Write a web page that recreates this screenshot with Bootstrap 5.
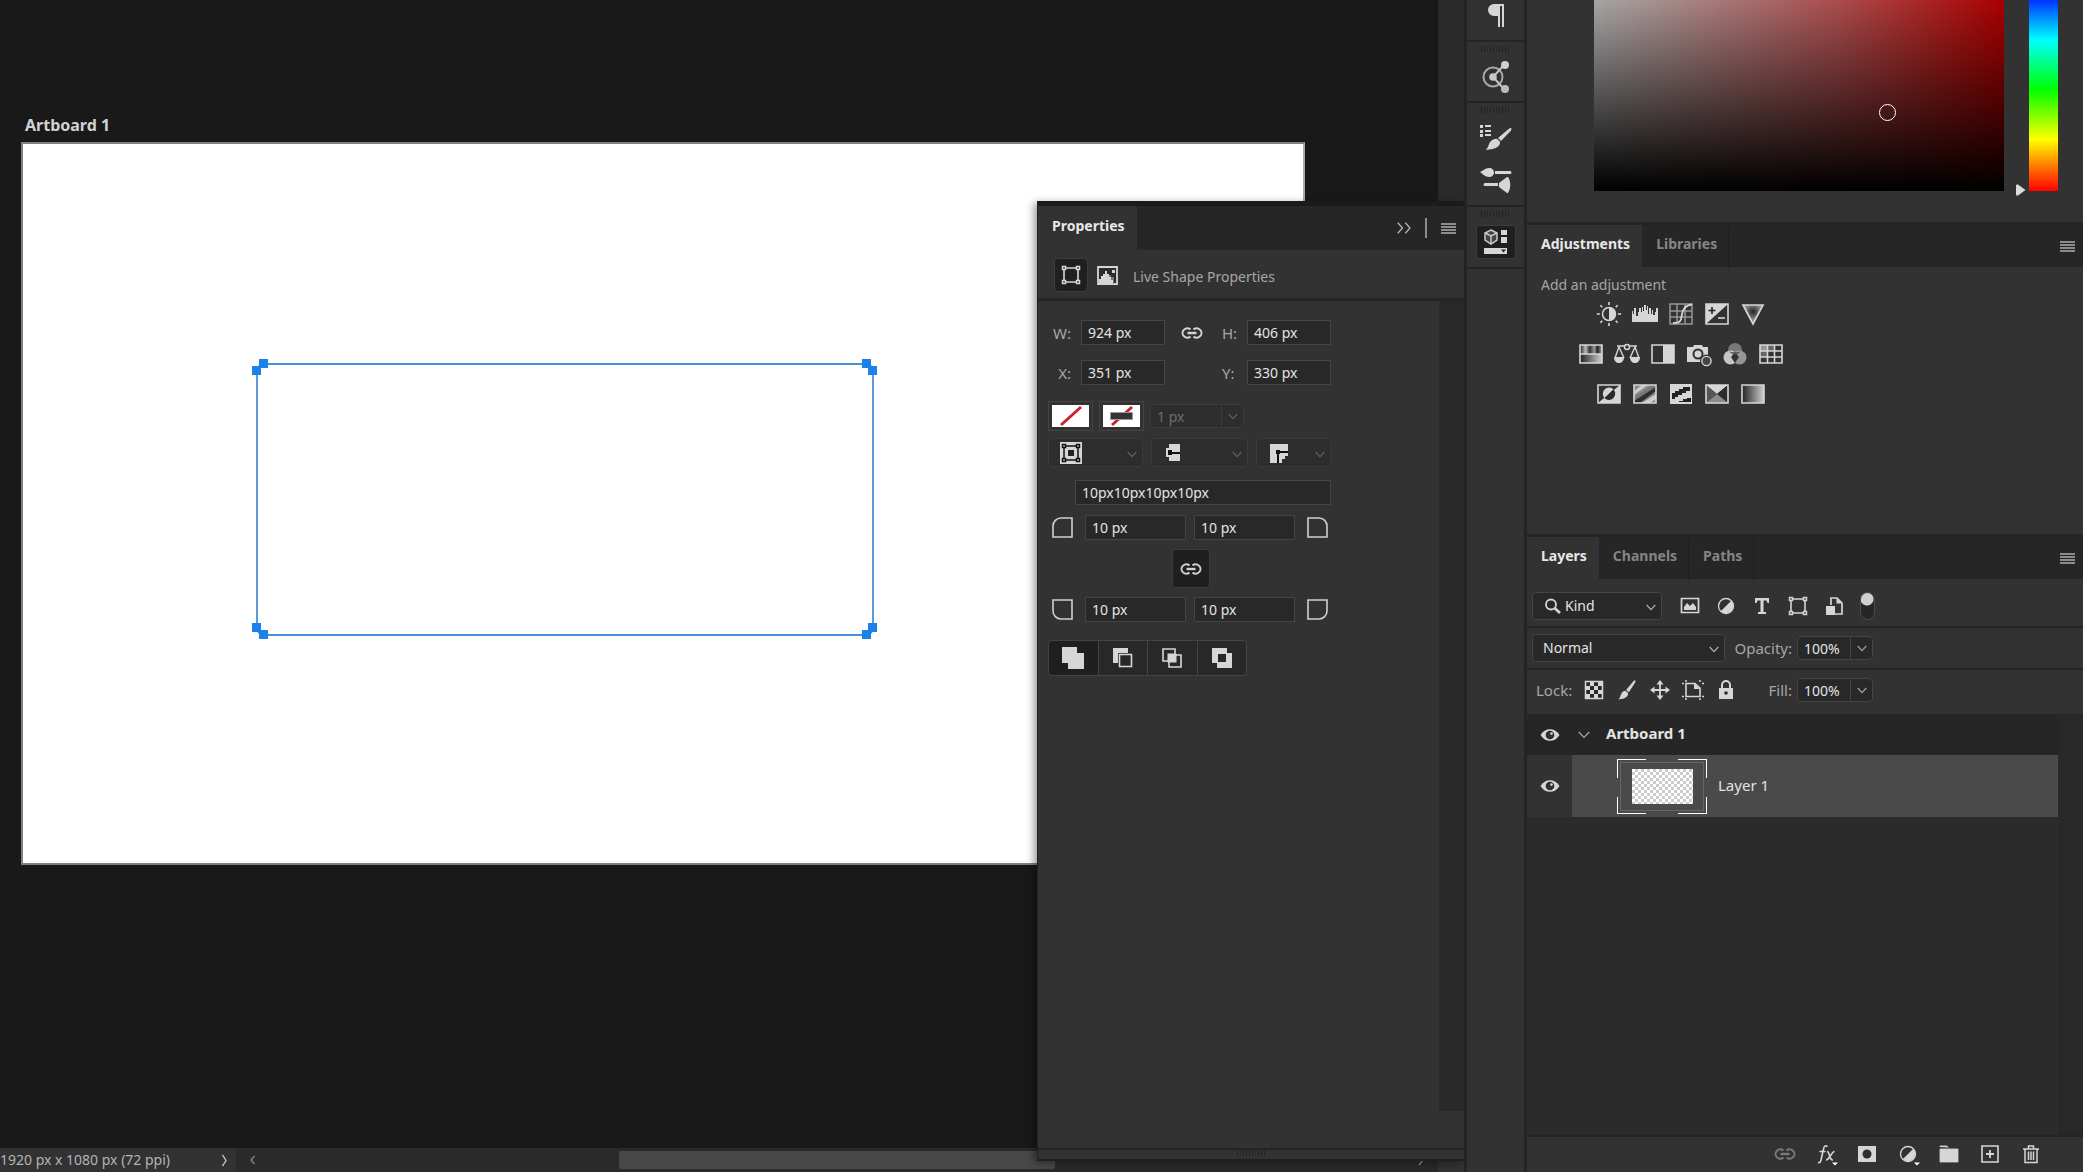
<!DOCTYPE html>
<html lang="en" data-bs-theme="dark">
<head>
<meta charset="utf-8">
<meta name="viewport" content="width=device-width, initial-scale=1">
<title>Artboard 1</title>
<link href="https://cdn.jsdelivr.net/npm/bootstrap@5.3.0/dist/css/bootstrap.min.css" rel="stylesheet">
<style>
:root{--panel:#323232;--well:#262626;--field:#282828;--edge:#444;--line:#242424;--ico:#d6d6d6;--dim:#a6a6a6;--txt:#e4e4e4}
body{background:#191919;color:var(--txt);font-family:"Noto Sans","Open Sans",sans-serif;font-size:14px;line-height:20px;overflow:hidden}
svg{display:block;flex:none}
.i24{width:24px;height:24px;color:var(--ico)}
.i20{width:20px;height:20px;color:var(--ico)}
.bare{background:none;border:0;padding:0;color:var(--ico)}
.dim{color:var(--dim)}
.lbl{color:var(--dim);font-size:15px}

/* canvas */
.vscroll{top:0;right:0;width:26px;height:201px;background:#2a2a2a}
.board-name{left:25px;top:113px;font-size:16px;line-height:24px;color:#d2d2d2}
.board{left:21px;top:142px;width:1284px;height:723px;background:#fff;border:2px solid #808080;border-right-color:#aaa}
.vshape{left:250px;top:357px;width:630px;height:286px}
.statusbar{height:24px;background:#2a2a2a}
.doc-size{width:236px;background:var(--panel);color:#b4b4b4}
.hthumb{left:619px;width:436px;top:3px;height:18px;background:#484848;border-radius:2px}
.corner-cell{width:26px;right:0;top:0;bottom:0;background:var(--panel)}
.end-arrow{right:40px;top:6px}

/* floating panel */
.floater{top:201px;right:0;bottom:11px;width:426px;background:var(--panel);border-top:5px solid #1b1b1b;border-bottom:2px solid #1f1f1f;box-shadow:-1px 0 0 #222,-4px 2px 8px rgba(0,0,0,.4)}
.tabbar{height:42px;background:var(--well)}
.tabbar .nav-link{height:43px;padding:0 11px 6px 14px;border:0;border-radius:0;border-right:1px solid #202020;font-weight:700;color:#858585;display:flex;align-items:center;margin-bottom:-1px}
.tabbar .nav-link.active{background:var(--panel);color:#e8e8e8;border-color:transparent}
.floater .tabbar{height:44px}
.floater .tabbar .nav-link{height:44px;padding-bottom:4px}
.subhead{height:51px;border-bottom:3px solid var(--line);padding:2px 0 0 16px}
.modebtn{width:34px;height:34px;background:#1f1f1f;border:1px solid #3c3c3c;border-radius:4px;padding:0;display:flex;align-items:center;justify-content:center}
.pbody{padding:19px 0 0 10px}
.ptrack{width:25px;background:#292929;margin-bottom:37px}
.grip-row{height:11px;border-top:2px solid var(--line)}
.grip{width:29px;height:6px;background:repeating-linear-gradient(90deg,#242424 0 1px,transparent 1px 3px)}
.dims{display:grid;grid-template-columns:33px 84px 57px 25px 84px;row-gap:15px;align-items:center}
.dims .text-end{padding-right:10px}
.box{height:25px;background:var(--field);border:1px solid var(--edge);border-radius:0;color:var(--txt);font-size:14px;line-height:20px;padding:1px 6px;min-width:0;width:100%}
.corners{display:grid;grid-template-columns:29px 101px 101px 25px;column-gap:8px;align-items:center;width:280px}
.sw{width:45px;height:30px;background:none;border:1px solid var(--edge);padding:3px}
.sw svg{background:#fff}
.combo{height:24px;border:1px solid var(--edge);border-radius:4px;background:var(--field)}
.combo input{background:none;border:0;color:var(--txt);padding:0 0 0 6px;min-width:0;flex:1;height:22px}
.combo button{background:none;border:0;border-left:1px solid var(--edge);width:22px;padding:0;display:flex;align-items:center;justify-content:center;color:#a0a0a0}
.combo.off{border-color:#3c3c3c;background:#2d2d2d}
.combo.off input{color:#6e6e6e}
.combo.off button{border-color:#3c3c3c;color:#5c5c5c}
.pick{position:relative;border:1px solid var(--edge);border-radius:4px;background:var(--field);color:#b0b0b0}
.pick select{appearance:none;background:none;border:0;width:100%;height:100%;color:var(--txt);padding:0 24px 0 12px;font-size:14px;display:block}
.pick .ch{position:absolute;right:5px;bottom:8px;pointer-events:none}
.pick .lead-ico{position:absolute;left:11px;top:50%;transform:translateY(-50%);pointer-events:none}
.pick.off{background:#2d2d2d;border-color:#3b3b3b;height:29px;color:#606060}
.linkbtn{width:38px;height:39px;margin-left:124px;background:#1f1f1f;border:1px solid #3a3a3a;border-radius:3px;padding:0;display:flex;align-items:center;justify-content:center}
.ops{width:199px;height:36px}
.ops .btn{background:var(--field);border:1px solid var(--edge);border-radius:4px;padding:0;display:flex;align-items:center;justify-content:center;flex:1}
.ops .btn.active{background:#1f1f1f}

/* dock and right column */
.dock{width:61px;background:var(--panel);border-left:3px solid var(--line);border-right:1px solid var(--line)}
.dock section{border-bottom:2px solid var(--line);display:flex;flex-direction:column;align-items:center}
.side{width:558px;background:var(--panel);border-left:2px solid var(--line)}
.color-pane{height:225px;border-bottom:3px solid var(--line)}
.field2d{width:410px;height:191px;margin-left:67px;background:linear-gradient(to bottom,rgba(0,0,0,0),#000),linear-gradient(to right,#a6a6a6,#aa4c4c 60%,#aa0000)}
.ring{left:285px;top:104px;width:17px;height:17px;border:1px solid #fff;border-radius:50%}
.hue{width:29px;height:191px;background:linear-gradient(to bottom,#0033ff,#00ffff 21%,#00ff00 47%,#ffff00 73%,#ff0000)}
.adj-pane{height:312px;border-bottom:3px solid var(--line)}
.adj-row{display:flex;justify-content:center;gap:10px;width:230px;height:26px;align-items:center}
.adj-row svg{width:26px;height:26px;color:var(--ico)}
.strip{border-bottom:2px solid var(--line)}
.layer-list{background:#2b2b2b}
.ltrack{width:25px;background:#282828}
.lrow{font-size:15px}
.lrow span{padding-bottom:3px}
.eye-col{width:45px;display:flex;align-items:center;justify-content:center}
.thumb{width:90px;height:55px;background:linear-gradient(#fff 0 0) 0 0/29px 1px,linear-gradient(#fff 0 0) 100% 0/29px 1px,linear-gradient(#fff 0 0) 0 100%/29px 1px,linear-gradient(#fff 0 0) 100% 100%/29px 1px,linear-gradient(#fff 0 0) 0 0/1px 19px,linear-gradient(#fff 0 0) 0 100%/1px 17px,linear-gradient(#fff 0 0) 100% 0/1px 19px,linear-gradient(#fff 0 0) 100% 100%/1px 17px;background-repeat:no-repeat;padding:3px}
.thumb-in{border:1px solid #666;height:49px;display:flex;align-items:center;justify-content:center}
.checker{width:61px;height:35px;background:repeating-conic-gradient(#ccc 0 25%,#fff 0 50%) 0 0/6px 6px}
.foot{height:37px;border-top:2px solid var(--line);padding:0 40px 2px 0;gap:17px}
.toggle{appearance:none;width:15px;height:28px;border:1px solid #4c4c4c;border-radius:8px;margin:0;background:radial-gradient(circle at 6px 6px,#d0d0d0 0 6px,#262626 7px)}
</style>
<script src="https://cdn.jsdelivr.net/npm/bootstrap@5.3.0/dist/js/bootstrap.bundle.min.js"></script>
</head>
<body class="vh-100 d-flex">

<svg width="0" height="0" class="position-absolute" aria-hidden="true">
  <defs>
    <symbol id="chev" viewBox="0 0 10 7"><path d="M.7 1 5 5.600 9.300 1" fill="none" stroke="currentColor" stroke-width="1.200"/></symbol>
    <symbol id="burger" viewBox="0 0 15 11"><path d="M0 1h15M0 4h15M0 7h15M0 10h15" stroke="#8c8c8c" stroke-width="2" shape-rendering="crispEdges"/></symbol>
    <symbol id="chain" viewBox="0 0 22 12"><path d="M9.500 2.300A5 4.600 0 1 0 9.500 9.700M12.500 2.300a5 4.600 0 1 1 0 7.400" fill="none" stroke="currentColor" stroke-width="2"/><path d="M6.500 6h9" stroke="currentColor" stroke-width="2.400"/></symbol>
    <symbol id="frame" viewBox="0 0 20 20"><path d="M5 3h10M5 17h10M3 5v10M17 5v10" stroke="currentColor" stroke-width="1.600"/><path d="M1.500 1.500h3v3h-3zM15.500 1.500h3v3h-3zM1.500 15.500h3v3h-3zM15.500 15.500h3v3h-3z" fill="none" stroke="currentColor" stroke-width="1.500"/></symbol>
    <symbol id="eye" viewBox="0 0 20 14"><path d="M.5 7C5-.8 15-.8 19.500 7 15 14.800 5 14.800.5 7z" fill="currentColor"/><circle cx="10" cy="7" r="4.300" fill="#2b2b2b"/><circle cx="10" cy="7" r="2.800" fill="#333"/><circle cx="11.500" cy="5.600" r="1.300" fill="#d6d6d6"/></symbol>
    <symbol id="half" viewBox="0 0 20 20"><circle cx="10" cy="10" r="7.500" fill="none" stroke="currentColor" stroke-width="1.300"/><path d="M15.300 4.700A7.500 7.500 0 0 1 4.700 15.300z" fill="currentColor"/></symbol>
    <symbol id="brush" viewBox="0 0 20 22"><path d="M19 .5c.6.5.3 1.600-.2 2.400L12 13.500 9 11 17 1.500c.8-.8 1.500-1.300 2-1z" fill="currentColor"/><path d="M8.200 11.900l3 2.500c.3 3.500-2.500 6.500-10.700 7C3 19 2.500 17 4 14.500c1-1.700 2.500-2.500 4.200-2.600z" fill="currentColor"/></symbol>
    <linearGradient id="g1"><stop offset="0" stop-color="#222"/><stop offset="1" stop-color="#d0d0d0"/></linearGradient>
    <linearGradient id="g2"><stop offset="0" stop-color="#222"/><stop offset=".25" stop-color="#bbb"/><stop offset=".45" stop-color="#333"/><stop offset=".65" stop-color="#999"/><stop offset=".8" stop-color="#222"/><stop offset="1" stop-color="#aaa"/></linearGradient>
    <radialGradient id="g3" cx=".5" cy=".35" r=".4"><stop offset="0" stop-color="#222"/><stop offset="1" stop-color="#888"/></radialGradient>
  </defs>
</svg>

<!-- document area -->
<main class="position-relative flex-grow-1 d-flex flex-column overflow-hidden">
  <div class="flex-grow-1">
    <div class="vscroll position-absolute"></div>
    <div class="board-name position-absolute fw-bold">Artboard 1</div>
    <div class="board position-absolute"></div>
    <svg class="vshape position-absolute" viewBox="0 0 630 286" aria-label="Rounded rectangle">
      <rect x="7" y="7" width="616" height="271" rx="7" fill="none" stroke="#4a90d6" stroke-width="1.800"/>
      <g fill="#1a82ea" shape-rendering="crispEdges">
        <rect x="9" y="2" width="9" height="9"/><rect x="2" y="9" width="9" height="9"/>
        <rect x="612" y="2" width="9" height="9"/><rect x="618" y="9" width="9" height="9"/>
        <rect x="2" y="266" width="9" height="9"/><rect x="9" y="273" width="9" height="9"/>
        <rect x="618" y="266" width="9" height="9"/><rect x="612" y="273" width="9" height="9"/>
      </g>
    </svg>
  </div>
  <footer class="statusbar position-relative d-flex">
    <div class="doc-size d-flex align-items-center justify-content-between pe-2"><span class="text-nowrap">1920 px x 1080 px (72 ppi)</span>
      <button class="bare" aria-label="Document info"><svg width="7" height="13" viewBox="0 0 7 13"><path d="M1.500.8 5 6.500 1.500 12.200" fill="none" stroke="#c8c8c8" stroke-width="1.300"/></svg></button>
    </div>
    <button class="bare d-flex align-items-center" style="margin-left:14px" aria-label="Scroll left"><svg width="6" height="10" viewBox="0 0 6 10"><path d="M4.500.8 1 5l3.500 4.200" fill="none" stroke="#909090" stroke-width="1.200"/></svg></button>
    <div class="hthumb position-absolute"></div>
    <svg class="end-arrow position-absolute" width="6" height="12" viewBox="0 0 6 12"><path d="M1 1l4 5-4 5" fill="none" stroke="#a8a8a8" stroke-width="1.200"/></svg>
    <div class="corner-cell position-absolute"></div>
  </footer>

  <!-- properties -->
  <section class="floater position-absolute d-flex flex-column" aria-label="Properties">
    <div class="tabbar d-flex justify-content-between">
      <div class="nav"><a class="nav-link active" href="#props">Properties</a></div>
      <div class="d-flex align-items-center pe-2" style="gap:14px">
        <button class="bare" aria-label="Collapse"><svg width="14" height="12" viewBox="0 0 14 12"><path d="M.8.8 5.500 6 .8 11.200M8.300.8 13 6l-4.700 5.200" fill="none" stroke="#b4b4b4" stroke-width="1.300"/></svg></button>
        <svg width="2" height="20"><path d="M1 0v20" stroke="#8c8c8c" stroke-width="2"/></svg>
        <button class="bare" aria-label="Panel menu"><svg width="15" height="11"><use href="#burger"/></svg></button>
      </div>
    </div>
    <div class="subhead d-flex align-items-center" id="props">
      <button class="modebtn" aria-label="Shape"><svg class="i20"><use href="#frame"/></svg></button>
      <button class="bare" style="margin:0 15px 0 9px" aria-label="Mask"><svg width="21" height="19" viewBox="0 0 21 19"><path d="M1 1h19v17H1z" fill="#2c2c2c" stroke="#d6d6d6" stroke-width="1.800"/><path d="M11 9h3v2h3v7h-6z" fill="#777"/><path d="M8 5h2v3h2v3h2v3h2v4H2v-5h2v-3h2V8h2z" fill="#d6d6d6"/><path d="M15 4h3v3h-3z" fill="#d6d6d6"/></svg></button>
      <span class="dim pt-1">Live Shape Properties</span>
    </div>
    <div class="d-flex flex-grow-1">
      <form class="pbody flex-grow-1">
        <div class="dims">
          <label class="lbl text-end" for="fw">W:</label><input class="box" id="fw" value="924 px">
          <button type="button" class="bare d-flex ps-3" aria-label="Link size"><svg width="22" height="12"><use href="#chain"/></svg></button>
          <label class="lbl" for="fh">H:</label><input class="box" id="fh" value="406 px">
          <label class="lbl text-end" for="fx">X:</label><input class="box" id="fx" value="351 px">
          <span></span><label class="lbl" for="fy">Y:</label><input class="box" id="fy" value="330 px">
        </div>
        <div class="d-flex align-items-center mt-3" style="gap:6px">
          <button type="button" class="sw" aria-label="Fill"><svg width="37" height="22" viewBox="0 0 37 22"><path d="M9 20 29 2" stroke="#c8242c" stroke-width="3"/></svg></button>
          <button type="button" class="sw" aria-label="Stroke"><svg width="37" height="22" viewBox="0 0 37 22"><path d="M9 20 29 2" stroke="#c8242c" stroke-width="3"/><path d="M7.500 7.500h22v7h-22z" fill="#333" stroke="#999"/></svg></button>
          <div class="combo off d-flex" style="width:94px"><input aria-label="Stroke width" value="1 px" disabled><button type="button" aria-label="Stroke width menu"><svg width="10" height="7"><use href="#chev"/></svg></button></div>
        </div>
        <div class="d-flex gap-2" style="margin-top:7px">
          <div class="pick off" style="width:95px"><svg class="lead-ico" width="22" height="22" viewBox="0 0 22 22"><path d="M0 0h22v22H0z" fill="#d6d6d6"/><path d="M4 4h14v14H4z" fill="none" stroke="#111" stroke-width="1.500"/><path d="M8 8h6v6H8z" fill="#222"/><path d="M2.500 2.500h3v3h-3zM16.500 2.500h3v3h-3zM2.500 16.500h3v3h-3zM16.500 16.500h3v3h-3z" fill="#d6d6d6" stroke="#111" stroke-width="1.500"/></svg><select aria-label="Stroke alignment"><option></option></select><svg class="ch" width="10" height="7"><use href="#chev"/></svg></div>
          <div class="pick off" style="width:97px"><svg class="lead-ico" width="22" height="22" viewBox="0 0 22 22"><path d="M6 2h11v17H6v-4H3V6h3z" fill="#d6d6d6"/><path d="M5 8h4v2h8v2H9v1H5z" fill="#111"/></svg><select aria-label="Stroke caps"><option></option></select><svg class="ch" width="10" height="7"><use href="#chev"/></svg></div>
          <div class="pick off" style="width:75px"><svg class="lead-ico" width="22" height="22" viewBox="0 0 22 22"><path d="M2 2h18v12h-3v3h-3v4H2z" fill="#d6d6d6"/><path d="M8 8h4v1h8v2h-8v1h-1v9H9v-9H8z" fill="#111"/></svg><select aria-label="Stroke corners"><option></option></select><svg class="ch" width="10" height="7"><use href="#chev"/></svg></div>
        </div>
        <div style="margin:13px 0 10px 27px;width:256px"><input class="box" aria-label="Corner radii" value="10px10px10px10px"></div>
        <div class="corners">
          <svg class="ms-1" width="21" height="21" viewBox="0 0 21 21"><path d="M1 20V9a8 8 0 0 1 8-8h11v19z" fill="none" stroke="#d0d0d0" stroke-width="1.600"/></svg>
          <input class="box" aria-label="Top left radius" value="10 px"><input class="box" aria-label="Top right radius" value="10 px">
          <svg class="ms-1" width="21" height="21" viewBox="0 0 21 21"><path d="M1 20V1h11a8 8 0 0 1 8 8v11z" fill="none" stroke="#d0d0d0" stroke-width="1.600"/></svg>
        </div>
        <div style="padding:9px 0"><button type="button" class="linkbtn" aria-label="Link radii"><svg width="22" height="12" color="#d0d0d0"><use href="#chain"/></svg></button></div>
        <div class="corners">
          <svg class="ms-1" width="21" height="21" viewBox="0 0 21 21"><path d="M1 1v11a8 8 0 0 0 8 8h11V1z" fill="none" stroke="#d0d0d0" stroke-width="1.600"/></svg>
          <input class="box" aria-label="Bottom left radius" value="10 px"><input class="box" aria-label="Bottom right radius" value="10 px">
          <svg class="ms-1" width="21" height="21" viewBox="0 0 21 21"><path d="M1 1v19h11a8 8 0 0 0 8-8V1z" fill="none" stroke="#d0d0d0" stroke-width="1.600"/></svg>
        </div>
        <div class="btn-group ops" style="margin-top:18px" role="group" aria-label="Path operations">
          <button type="button" class="btn active" aria-label="Combine"><svg width="22" height="22" viewBox="0 0 22 22"><path d="M0 0h15v6h7v16H6v-6H0z" fill="#d6d6d6"/></svg></button>
          <button type="button" class="btn" aria-label="Subtract"><svg width="22" height="22" viewBox="0 0 22 22"><path d="M1 1h15v5H6v10H1z" fill="#d6d6d6"/><path d="M7.500 7.500h12v12h-12z" fill="none" stroke="#d6d6d6" stroke-width="1.600"/></svg></button>
          <button type="button" class="btn" aria-label="Intersect"><svg width="22" height="22" viewBox="0 0 22 22"><path d="M2 2h12v12H2zM8 8h12v12H8z" fill="none" stroke="#d6d6d6" stroke-width="1.600"/><path d="M6.500 6.500h9v9h-9z" fill="#d6d6d6"/></svg></button>
          <button type="button" class="btn" aria-label="Exclude"><svg width="22" height="22" viewBox="0 0 22 22"><path fill-rule="evenodd" d="M1 1h15v5h5v15H6v-5H1zm6 6v8h8V7z" fill="#d6d6d6"/></svg></button>
        </div>
      </form>
      <div class="ptrack"></div>
    </div>
    <div class="grip-row d-flex justify-content-center"><div class="grip"></div></div>
  </section>
</main>

<!-- icon dock -->
<nav class="dock d-flex flex-column" aria-label="Panels">
  <section style="height:42px"><button class="bare mt-1" aria-label="Paragraph"><svg width="18" height="24" viewBox="0 0 18 24"><path d="M7 0h10v23h-2V2h-2v21h-2V12H7A6 6 0 0 1 7 0z" fill="#d6d6d6"/></svg></button></section>
  <section style="height:61px"><div class="grip mt-1"></div>
    <button class="bare mt-2" aria-label="Share"><svg width="28" height="34" viewBox="0 0 28 34"><circle cx="11" cy="17" r="9.500" fill="none" stroke="#a8a8a8" stroke-width="2"/><path d="M22 5 11 17l11 12" fill="none" stroke="#c4c4c4" stroke-width="2"/><circle cx="11" cy="17" r="3.800" fill="#c8c8c8"/><circle cx="23" cy="5" r="4" fill="#d0d0d0"/><circle cx="23" cy="29" r="4" fill="#bbb"/></svg></button></section>
  <section style="height:104px"><div class="grip mt-1"></div>
    <button class="bare" style="margin-top:11px" aria-label="Brushes"><svg width="32" height="28" viewBox="0 0 32 28"><path d="M0 1h3v3H0zM5 1h6v2H5zM0 6h3v3H0zM5 6h6v2H5zM0 10h3v3H0zM5 10h6v2H5z" fill="#d6d6d6"/><path d="M31 4c.8.700.4 2-.4 3L21 17l-3-3L28 5.500c1.200-1 2.300-1.800 3-1.500z" fill="#d6d6d6"/><path d="M17 14.800l3 3c.5 4-3.500 8-14.500 8 3-2 2.500-4.500 4.500-7.500 1.500-2.500 4.500-3.800 7-3.500z" fill="#d6d6d6"/></svg></button>
    <button class="bare" style="margin-top:16px" aria-label="Brush settings"><svg width="32" height="26" viewBox="0 0 32 26"><path d="M0 4c3-1 5-4 9-4 3 0 5 2 5 4.500S12 9 9 9C5 9 3 6 0 4zM15 3h15a1.500 1.500 0 0 1 0 3H15zM5 15h13v3H5a1.500 1.500 0 0 1 0-3zM19 15l8-6h1c3 4 3 11 0 16h-1l-8-6z" fill="#d6d6d6"/></svg></button></section>
  <section style="height:62px"><div class="grip mt-1"></div>
    <button class="modebtn mt-2" style="width:40px" aria-label="Properties panel"><svg width="24" height="26" viewBox="0 0 24 26"><path d="M7 1l6 3v7l-6 4-6-4V4z" fill="#444" stroke="#c8c8c8" stroke-width="1.500"/><path d="M1 4l6 3 6-3M7 7v8" fill="none" stroke="#c8c8c8" stroke-width="1.500"/><path d="M17 1h6v5h-6zM17 8h6v6h-6zM0 19h23v6H0z" fill="#d6d6d6"/><path d="M17 20.500h5l-2.500 3z" fill="#222"/></svg></button></section>
</nav>

<!-- right column -->
<aside class="side d-flex flex-column">
  <section class="color-pane d-flex align-items-start position-relative" aria-label="Color">
    <div class="field2d position-relative"><span class="ring position-absolute"></span></div>
    <svg style="margin:184px 3px 0 12px" width="10" height="12" viewBox="0 0 10 12"><path d="M0 1.500Q0 0 2 .5L9.500 6 2 11.500Q0 12 0 10.500z" fill="#dcdcdc"/></svg>
    <div class="hue"></div>
  </section>

  <section class="adj-pane" aria-label="Adjustments">
    <div class="tabbar d-flex justify-content-between align-items-center">
      <div class="nav align-self-start"><a class="nav-link active" href="#adj">Adjustments</a><a class="nav-link" href="#lib">Libraries</a></div>
      <button class="bare me-2" aria-label="Adjustments menu"><svg width="15" height="11"><use href="#burger"/></svg></button>
    </div>
    <div id="adj" style="padding:8px 0 0 14px">
      <div class="dim">Add an adjustment</div>
      <div class="d-flex flex-column" style="gap:14px;padding:6px 0 0 25px">
        <div class="adj-row">
          <svg viewBox="0 0 26 26"><circle cx="13" cy="13" r="6.500" fill="none" stroke="currentColor" stroke-width="1.500"/><path d="M13 6.500a6.500 6.500 0 0 1 0 13z" fill="currentColor"/><path d="M13 1v3M13 22v3M.8 13h3M22 13h3.200M4.300 4.300l2 2M19.700 19.700l2 2M4.300 21.700l2-2M19.700 6.300l2-2" stroke="currentColor" stroke-width="1.600"/></svg>
          <svg viewBox="0 0 26 26"><path d="M0 21V10h1v3h1V7h2v8h2v-4h1V7h2v4h1V6h1v4h1V4h2v5h1V5h1v8h1V7h2v6h1V9h1v5h2v-3h1V7h2v5h1v9z" fill="currentColor"/></svg>
          <svg viewBox="0 0 26 26"><path d="M2 3h22v20H2zM9 3v20M17 3v20M2 10h22M2 16h22" fill="none" stroke="#969696" stroke-width="1.500"/><path d="M5 22c9 0 8-4 9-9s3-9 10-9.500" fill="none" stroke="currentColor" stroke-width="1.800"/></svg>
          <svg viewBox="0 0 26 26"><path d="M2 3h22v20H2z" fill="none" stroke="currentColor" stroke-width="1.600"/><path d="M2 3h22L2 23z" fill="currentColor"/><path d="M4.500 9.500h7M8 6v7" stroke="#222" stroke-width="1.600"/><path d="M14 17h7" stroke="currentColor" stroke-width="1.600"/></svg>
          <svg viewBox="0 0 26 26"><path d="M3 4h20L13 23z" fill="url(#g3)" stroke="currentColor" stroke-width="1.700"/></svg>
        </div>
        <div class="adj-row">
          <svg viewBox="0 0 26 26"><path d="M2 4h22v9H2z" fill="url(#g2)"/><path d="M2 13h22v9H2z" fill="url(#g1)"/><path d="M2 4h22v18H2zM2 13h22" fill="none" stroke="currentColor" stroke-width="1.600"/></svg>
          <svg viewBox="0 0 26 26"><path d="M3 5h20M5 6 1 17M5 6l5 11M21 6l-5 11M21 6l4 11" fill="none" stroke="currentColor" stroke-width="1.400"/><circle cx="13" cy="6" r="2.500" fill="#323232" stroke="currentColor" stroke-width="1.500"/><path d="M0 16h10c0 8-10 8-10 0zM16 16h10c0 8-10 8-10 0z" fill="currentColor"/></svg>
          <svg viewBox="0 0 26 26"><path d="M2 4h22v18H2z" fill="none" stroke="currentColor" stroke-width="1.600"/><path d="M13 4h11v18H13z" fill="currentColor"/></svg>
          <svg viewBox="0 0 26 26"><path d="M1 6h6l1-2h8l1 2h5v15H1z" fill="currentColor"/><circle cx="12" cy="13" r="4.500" fill="none" stroke="#323232" stroke-width="2"/><circle cx="20.500" cy="20" r="5" fill="#323232" stroke="#323232" stroke-width="3"/><circle cx="20.500" cy="20" r="4.600" fill="#444" stroke="currentColor" stroke-width="1.400"/></svg>
          <svg viewBox="0 0 26 26"><circle cx="13" cy="9" r="7" fill="#777"/><circle cx="8.500" cy="16.500" r="7" fill="#d6d6d6" opacity=".9"/><circle cx="17.500" cy="16.500" r="7" fill="#a8a8a8" opacity=".85"/><path d="M13 11l4 5-4 6-4-6z" fill="#333"/><path d="M7 10a7 7 0 0 0 6 1 7 7 0 0 0 6-1 7 7 0 0 1-12 0z" fill="#555"/></svg>
          <svg viewBox="0 0 26 26"><path d="M2 4h22v18H2z" fill="#333"/><path d="M2 4h8v6H2z" fill="#999"/><path d="M10 4h7v6h-7zM2 10h8v6H2z" fill="#666"/><path d="M2 4h22v18H2zM9.500 4v18M16.500 4v18M2 10h22M2 16h22" fill="none" stroke="currentColor" stroke-width="1.600"/></svg>
        </div>
        <div class="adj-row">
          <svg viewBox="0 0 26 26"><path d="M2 4h22v18H2z" fill="none" stroke="currentColor" stroke-width="1.600"/><path d="M24 4v18H2z" fill="currentColor"/><path d="M17.500 8.500A6 6 0 0 0 8.500 17z" fill="currentColor"/><path d="M17.500 8.500a6 6 0 0 1-9 8.500z" fill="#2b2b2b"/></svg>
          <svg viewBox="0 0 26 26"><path d="M2 4h22v18H2z" fill="#888"/><path d="M2 10 10 4h6L2 14z" fill="#ccc"/><path d="M2 17 20 4h4v3L5 22H2z" fill="#777"/><path d="M2 20 24 6v4L8 22H2z" fill="#2e2e2e"/><path d="M10 22 24 13v5l-6 4z" fill="#d0d0d0"/><path d="M2 4h22v18H2z" fill="none" stroke="currentColor" stroke-width="1.600"/></svg>
          <svg viewBox="0 0 26 26"><path d="M2 3h22v20H2z" fill="currentColor"/><path d="M4 12h3v-2h4V8h4V6h7v4h-4v2h-4v2h-4v2H7v2H4zM11 20h4v-2h4v-1h4v4H11z" fill="#222"/></svg>
          <svg viewBox="0 0 26 26"><path d="M2 4h22L13 13z" fill="#d6d6d6"/><path d="M2 4l11 9L2 22z" fill="#555"/><path d="M24 4v18l-11-9z" fill="#2b2b2b"/><path d="M2 22l11-9 11 9z" fill="#8c8c8c"/><path d="M2 4h22v18H2z" fill="none" stroke="currentColor" stroke-width="1.600"/></svg>
          <svg viewBox="0 0 26 26"><path d="M2 4h22v18H2z" fill="url(#g1)" stroke="currentColor" stroke-width="1.600"/></svg>
        </div>
      </div>
    </div>
  </section>

  <section class="flex-grow-1 d-flex flex-column" aria-label="Layers">
    <div class="tabbar d-flex justify-content-between align-items-center">
      <div class="nav align-self-start"><a class="nav-link active" href="#layers">Layers</a><a class="nav-link" href="#channels">Channels</a><a class="nav-link" href="#paths">Paths</a></div>
      <button class="bare me-2" aria-label="Layers menu"><svg width="15" height="11"><use href="#burger"/></svg></button>
    </div>
    <div class="strip d-flex align-items-center" style="height:49px;padding:7px 0 0 5px">
      <div class="pick" style="width:130px;height:28px"><svg class="lead-ico" width="17" height="16" viewBox="0 0 17 16"><circle cx="7" cy="6.500" r="5" fill="none" stroke="#d6d6d6" stroke-width="1.800"/><path d="M10.500 10 16 15" stroke="#d6d6d6" stroke-width="2.600"/></svg><select aria-label="Filter type" style="padding-left:32px"><option>Kind</option></select><svg class="ch" width="10" height="7"><use href="#chev"/></svg></div>
      <div class="d-flex align-items-center gap-3" style="margin-left:18px">
        <button class="bare" aria-label="Pixel layers"><svg class="i20" viewBox="0 0 20 20"><path d="M1.500 2.500h17v14h-17z" fill="none" stroke="currentColor" stroke-width="1.700"/><path d="M4 14V11l3-4 3 3 3-3 3 4v3z" fill="currentColor"/></svg></button>
        <button class="bare" aria-label="Adjustment layers"><svg class="i20"><use href="#half"/></svg></button>
        <button class="bare" aria-label="Type layers"><svg class="i20" viewBox="0 0 20 20"><path d="M3 2h14v5h-1.500l-1-2.500h-3V16H14v2H6v-2h2.500V4.500h-3L4.500 7H3z" fill="currentColor"/></svg></button>
        <button class="bare" aria-label="Shape layers"><svg class="i20"><use href="#frame"/></svg></button>
        <button class="bare" aria-label="Smart objects"><svg class="i20" viewBox="0 0 20 20"><path d="M7 9V2h6l5 5v11h-7" fill="none" stroke="currentColor" stroke-width="1.700"/><path d="M12.500 2v5.500H18M2 10h9v9H2z" fill="currentColor"/></svg></button>
        <input type="checkbox" class="toggle" aria-label="Layer filtering" checked>
      </div>
    </div>
    <div class="strip d-flex align-items-center" style="height:42px;padding-left:5px">
      <div class="pick" style="width:193px;height:28px"><select aria-label="Blend mode" style="padding-left:10px"><option>Normal</option></select><svg class="ch" width="10" height="7"><use href="#chev"/></svg></div>
      <label class="lbl text-end" style="width:67px;margin-right:5px" for="op">Opacity:</label>
      <div class="combo d-flex" style="width:76px"><input id="op" value="100%"><button aria-label="Opacity slider"><svg width="10" height="7"><use href="#chev"/></svg></button></div>
    </div>
    <div class="d-flex align-items-center" style="height:44px;padding:0 0 4px 9px">
      <span class="lbl" style="width:48px">Lock:</span>
      <div class="d-flex align-items-center" style="gap:13px;width:176px">
        <button class="bare" aria-label="Lock transparency"><svg class="i20" viewBox="0 0 20 20"><path d="M1.500 1.500h17v17h-17z" fill="#2a2a2a" stroke="currentColor" stroke-width="1.500"/><path d="M6 2h4v4H6zM14 2h4v4h-4zM2 6h4v4H2zM10 6h4v4h-4zM6 10h4v4H6zM14 10h4v4h-4zM2 14h4v4H2zM10 14h4v4h-4z" fill="currentColor"/></svg></button>
        <button class="bare" aria-label="Lock pixels"><svg class="i20"><use href="#brush"/></svg></button>
        <button class="bare" aria-label="Lock position"><svg class="i20" viewBox="0 0 20 20"><path d="M10 3v14M3 10h14" stroke="currentColor" stroke-width="1.800"/><path d="M10 0l3.500 4.500h-7zM10 20l3.500-4.500h-7zM0 10l4.500-3.500v7zM20 10l-4.500-3.500v7z" fill="currentColor"/></svg></button>
        <button class="bare" aria-label="Lock artboard"><svg class="i20" viewBox="0 0 20 20" overflow="visible"><path d="M3 3.500h9l5 4.500v8.500H3z" fill="none" stroke="currentColor" stroke-width="1.600"/><path d="M11 3l6 6h-6z" fill="currentColor"/><path d="M3 0v2M17 0v2M3 18v2M17 18v2M-1 3.500h2M19 3.500h2M-1 16.500h2M19 16.500h2" stroke="currentColor" stroke-width="1.500"/></svg></button>
        <button class="bare" aria-label="Lock all"><svg class="i20" viewBox="0 0 20 20"><path d="M6 9V5a4 4 0 0 1 8 0v4" fill="none" stroke="currentColor" stroke-width="2"/><path d="M3 8h14v11H3z" fill="currentColor"/><circle cx="10" cy="13" r="1.800" fill="#2a2a2a"/></svg></button>
      </div>
      <label class="lbl text-end" style="width:32px;margin-right:5px" for="fl">Fill:</label>
      <div class="combo d-flex" style="width:76px"><input id="fl" value="100%"><button aria-label="Fill slider"><svg width="10" height="7"><use href="#chev"/></svg></button></div>
    </div>
    <div class="layer-list flex-grow-1 d-flex" id="layers">
      <div class="flex-grow-1">
        <div class="lrow d-flex align-items-center fw-bold" style="height:41px;background:#262626">
          <button class="bare eye-col" aria-label="Toggle Artboard 1"><svg width="20" height="14"><use href="#eye"/></svg></button>
          <button class="bare" style="margin:0 16px 0 6px" aria-label="Collapse group"><svg width="12" height="8" viewBox="0 0 12 8"><path d="M.8 1 6 6.500 11.200 1" fill="none" stroke="#a8a8a8" stroke-width="1.200"/></svg></button>
          <span>Artboard 1</span>
        </div>
        <div class="lrow d-flex" style="height:62px">
          <button class="bare eye-col" style="background:#323232" aria-label="Toggle Layer 1"><svg width="20" height="14"><use href="#eye"/></svg></button>
          <div class="flex-grow-1 d-flex align-items-center" style="background:#4a4a4a;padding-left:45px">
            <div class="thumb"><div class="thumb-in"><div class="checker"></div></div></div>
            <span style="margin-left:11px">Layer 1</span>
          </div>
        </div>
      </div>
      <div class="ltrack"></div>
    </div>
    <div class="foot d-flex align-items-center justify-content-end">
      <button class="bare" aria-label="Link layers"><svg width="24" height="24" viewBox="0 0 24 24" color="#7a7a7a"><use href="#chain" x="1" y="6" width="22" height="12"/></svg></button>
      <button class="bare" aria-label="Layer style"><svg width="24" height="24" viewBox="0 0 24 24"><path d="M13.500 4.500C11 3 10 4.500 9.500 7L7 18c-.5 2.500-1.500 3-3 2.500M5.500 9.500h6" fill="none" stroke="#d6d6d6" stroke-width="1.600"/><path d="M13 9.500c3 0 2 9 6 8.500M20.500 9.500c-3 0-5 8.500-8.500 8.500" fill="none" stroke="#d6d6d6" stroke-width="1.600"/><path d="M18 20.500h6l-3 3z" fill="#fff"/></svg></button>
      <button class="bare" aria-label="Add mask"><svg width="24" height="24" viewBox="0 0 24 24"><path d="M3 4h18v16H3z" fill="#d6d6d6"/><circle cx="12" cy="12" r="4.500" fill="#2e2e2e"/></svg></button>
      <button class="bare" aria-label="New adjustment layer"><svg width="24" height="24" viewBox="0 0 24 24" color="#d6d6d6"><use href="#half" x="2" y="2" width="20" height="20"/><path d="M18 20.500h6l-3 3z" fill="#fff"/></svg></button>
      <button class="bare" aria-label="New group"><svg width="24" height="24" viewBox="0 0 24 24"><path d="M3 5V4h7l1.500 1.500M3 7h18v13H3z" fill="#d6d6d6" stroke="#d6d6d6" stroke-width=".8"/></svg></button>
      <button class="bare" aria-label="New layer"><svg width="24" height="24" viewBox="0 0 24 24"><path d="M4 4h16v16H4z" fill="none" stroke="#d6d6d6" stroke-width="1.600"/><path d="M12 8v8M8 12h8" stroke="#d6d6d6" stroke-width="1.800"/></svg></button>
      <button class="bare" aria-label="Delete layer"><svg width="24" height="24" viewBox="0 0 24 24"><path d="M4 7h16M6 7.500v13h12v-13M9.500 6.500V4h5v2.500M9.500 9.500V18M12 9.500V18M14.500 9.500V18" fill="none" stroke="#d6d6d6" stroke-width="1.500"/></svg></button>
    </div>
  </section>
</aside>
</body>
</html>
